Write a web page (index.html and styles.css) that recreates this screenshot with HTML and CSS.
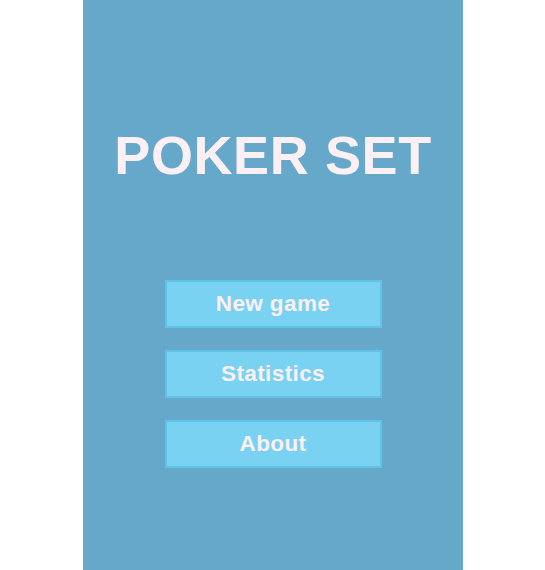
FILE: index.html
```html
<!DOCTYPE html>
<html>
<head>
<meta charset="utf-8">
<link rel="stylesheet" href="styles.css">
</head>
<body>
<div class="panel">
  <h1 class="title">POKER SET</h1>
  <div class="menu">
    <button class="btn">New game</button>
    <button class="btn">Statistics</button>
    <button class="btn">About</button>
  </div>
</div>
</body>
</html>
```
FILE: styles.css
```css
html, body {
  margin: 0;
  padding: 0;
  background: #ffffff;
  height: 100%;
}
body {
  display: flex;
  justify-content: flex-start;
}
.panel {
  margin-left: 83px;
  width: 380px;
  height: 570px;
  background: #65a8c9;
  display: flex;
  flex-direction: column;
  align-items: center;
  font-family: "Liberation Sans", Arial, sans-serif;
}
.title {
  margin: 124px 0 0 0;
  font-size: 54px;
  font-weight: bold;
  line-height: 62px;
  color: #fcf0f5;
  letter-spacing: 0.6px;
}
.menu {
  margin-top: 94px;
  display: flex;
  flex-direction: column;
  gap: 22px;
}
.btn {
  width: 217px;
  height: 48px;
  background: #79d2f2;
  border: 2px solid #5ec3e6;
  color: #fcf0f5;
  font-family: "Liberation Sans", Arial, sans-serif;
  font-weight: bold;
  font-size: 22.5px;
  letter-spacing: 0.4px;
  padding: 0 0 1px 0;
  box-sizing: border-box;
}
```
